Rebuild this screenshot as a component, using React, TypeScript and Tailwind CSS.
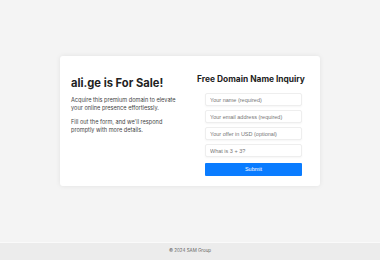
import React from "react";

const fields = [
  "Your name (required)",
  "Your email address (required)",
  "Your offer in USD (optional)",
  "What is 3 + 3?",
];

export default function App() {
  return (
    <div className="flex min-h-screen flex-col bg-[#f4f4f4] font-['Inter',sans-serif]">
      <main className="flex flex-1 items-center justify-center">
        <div className="flex h-[130px] w-[260px] rounded-[3px] bg-white px-[11px] shadow-[0_0_5px_rgba(0,0,0,0.08)]">
          <div className="w-[116px] pt-[19px]">
            <h1 className="text-[11.2px] font-bold leading-[16px] text-[#222]">
              ali.ge is For Sale!
            </h1>
            <p className="mt-[5px] text-[5.6px] leading-[8px] text-[#444]">
              Acquire this premium domain to elevate your online presence
              effortlessly.
            </p>
            <p className="mt-[6px] text-[5.6px] leading-[8px] text-[#444]">
              Fill out the form, and we'll respond promptly with more details.
            </p>
          </div>
          <div className="flex flex-1 flex-col items-center pl-[6px] pt-[17px]">
            <h2 className="text-[8.4px] font-bold leading-[12px] text-[#222]">
              Free Domain Name Inquiry
            </h2>
            <form
              className="ml-[5px] mt-[8px] flex w-[97px] flex-col gap-[4px] font-['Liberation_Sans',Arial,sans-serif]"
              onSubmit={(e) => e.preventDefault()}
            >
              {fields.map((f) => (
                <input
                  key={f}
                  placeholder={f}
                  className="h-[13px] w-full rounded-[2px] border border-[#eeeeee] bg-white px-[4px] text-[5.5px] text-[#333] shadow-[0_1px_2px_rgba(0,0,0,0.04)] outline-none placeholder:text-[#777]"
                />
              ))}
              <button
                type="submit"
                className="mt-[2px] h-[13px] w-full rounded-[1px] bg-[#0a7cff] text-[5.5px] font-normal text-white"
              >
                Submit
              </button>
            </form>
          </div>
        </div>
      </main>
      <footer className="flex h-[18px] items-center justify-center border-t border-t-[#fafafa] bg-[#ececec] text-[4.5px] text-[#666]">
        © 2024 SAM Group
      </footer>
    </div>
  );
}
